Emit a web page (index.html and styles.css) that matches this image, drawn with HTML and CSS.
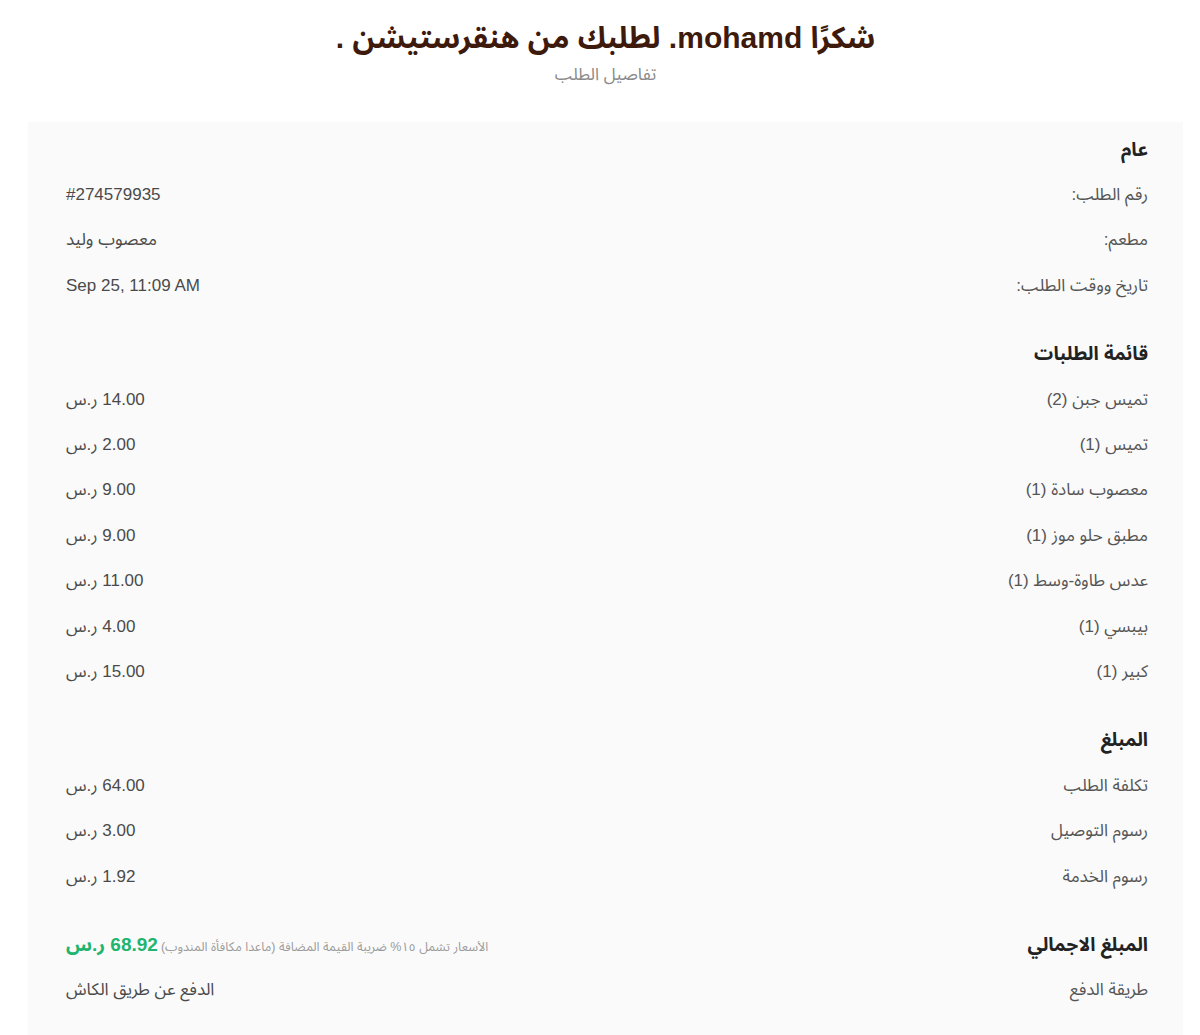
FILE: index.html
```html
<!DOCTYPE html>
<html lang="ar" dir="rtl">
<head>
<meta charset="utf-8">
<title>تفاصيل الطلب</title>
<link rel="stylesheet" href="styles.css">
</head>
<body>
<div class="page">
  <header class="head">
    <h1 class="title">شكرًا mohamd. لطلبك من هنقرستيشن .</h1>
    <p class="subtitle">تفاصيل الطلب</p>
  </header>
  <main class="card">
    <section class="section">
      <div class="row"><span class="heading">عام</span></div>
      <div class="row"><span class="label">رقم الطلب:</span><span class="value">#274579935</span></div>
      <div class="row"><span class="label">مطعم:</span><span class="value">معصوب وليد</span></div>
      <div class="row"><span class="label">تاريخ ووقت الطلب:</span><span class="value">Sep 25, 11:09 AM</span></div>
    </section>
    <section class="section">
      <div class="row"><span class="heading">قائمة الطلبات</span></div>
      <div class="row"><span class="label">تميس جبن (2)</span><span class="value">14.00 ر.س</span></div>
      <div class="row"><span class="label">تميس (1)</span><span class="value">2.00 ر.س</span></div>
      <div class="row"><span class="label">معصوب سادة (1)</span><span class="value">9.00 ر.س</span></div>
      <div class="row"><span class="label">مطبق حلو موز (1)</span><span class="value">9.00 ر.س</span></div>
      <div class="row"><span class="label">عدس طاوة-وسط (1)</span><span class="value">11.00 ر.س</span></div>
      <div class="row"><span class="label">بيبسي (1)</span><span class="value">4.00 ر.س</span></div>
      <div class="row"><span class="label">كبير (1)</span><span class="value">15.00 ر.س</span></div>
    </section>
    <section class="section">
      <div class="row"><span class="heading">المبلغ</span></div>
      <div class="row"><span class="label">تكلفة الطلب</span><span class="value">64.00 ر.س</span></div>
      <div class="row"><span class="label">رسوم التوصيل</span><span class="value">3.00 ر.س</span></div>
      <div class="row"><span class="label">رسوم الخدمة</span><span class="value">1.92 ر.س</span></div>
    </section>
    <section class="section">
      <div class="row"><span class="heading">المبلغ الاجمالي</span><span class="value total-cell"><span class="note">الأسعار تشمل ١٥% ضريبة القيمة المضافة (ماعدا مكافأة المندوب)</span> <span class="total">68.92 ر.س</span></span></div>
      <div class="row"><span class="label">طريقة الدفع</span><span class="value">الدفع عن طريق الكاش</span></div>
    </section>
  </main>
</div>
</body>
</html>
```

FILE: styles.css
```css
html, body {
  margin: 0;
  padding: 0;
  background: #ffffff;
}

body {
  font-family: "Liberation Sans", "Noto Sans Arabic", "DejaVu Sans", sans-serif;
  color: #555555;
}

.page {
  width: 1155px;
  margin-right: 17px;
  margin-left: auto;
  padding-top: 20px;
}

.head {
  text-align: center;
}

.title {
  margin: 0;
  font-size: 30px;
  line-height: 36px;
  font-weight: 700;
  color: #3d1a0c;
}

.subtitle {
  margin: 8px 0 0;
  font-size: 17px;
  line-height: 22px;
  color: #8a8a8a;
}

.card {
  margin-top: 36px;
  background: #fafafa;
  padding: 5px 35px 24px 38px;
  min-height: 900px;
  box-sizing: border-box;
}

.section + .section {
  margin-top: 23px;
}

.row {
  height: 45.4px;
  display: flex;
  align-items: center;
  justify-content: space-between;
  font-size: 17px;
}

.heading {
  font-weight: 700;
  color: #222222;
  font-size: 19px;
}

.label {
  color: #555555;
}

.value {
  color: #4a4a4a;
}

.total-cell {
  display: flex;
  align-items: baseline;
  gap: 3px;
}

.note {
  font-size: 12.5px;
  color: #9a9a9a;
}

.total {
  font-size: 19px;
  font-weight: 700;
  color: #1fb46f;
}
```
